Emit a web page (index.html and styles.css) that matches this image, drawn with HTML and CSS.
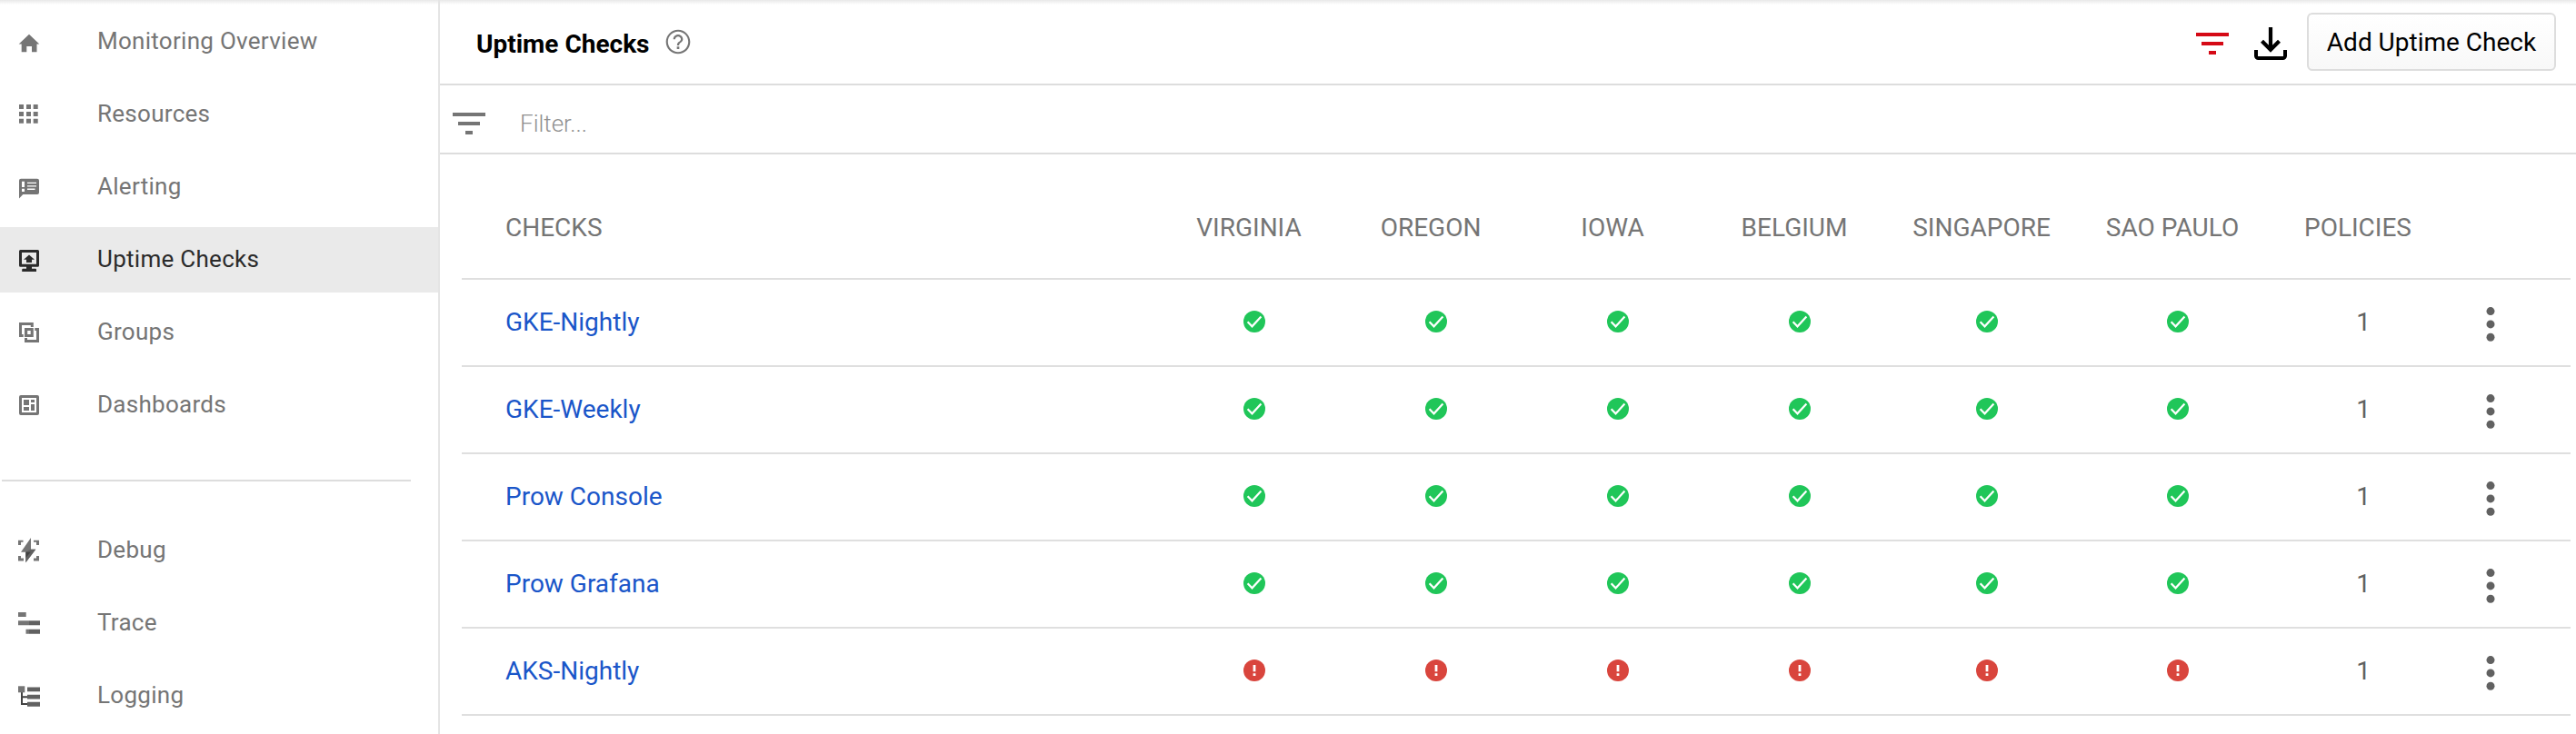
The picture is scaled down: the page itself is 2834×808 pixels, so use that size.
FILE: index.html
```html
<!DOCTYPE html>
<html lang="en">
<head>
<meta charset="utf-8">
<title>Uptime Checks</title>
<link rel="stylesheet" href="styles.css">
</head>
<body>
<svg class="defs" aria-hidden="true">
  <symbol id="ok" viewBox="0 0 24 24"><circle cx="12" cy="12" r="12" fill="#20c659"/><path d="M4.6 12.3l4.9 5L19.4 6.6" fill="none" stroke="#fff" stroke-width="2.2"/></symbol>
  <symbol id="bad" viewBox="0 0 24 24"><circle cx="12" cy="12" r="12" fill="#d9453d"/><path d="M10.6 6h2.8v7.2h-2.8zM10.6 15.2h2.8v2.8h-2.8z" fill="#fff"/></symbol>
  <symbol id="more" viewBox="0 0 10 38"><g fill="#616161"><circle cx="5" cy="4.6" r="4.5"/><circle cx="5" cy="18.9" r="4.5"/><circle cx="5" cy="33.2" r="4.5"/></g></symbol>
  <symbol id="filter" viewBox="0 0 36 24"><path d="M0 0h36v4H0zM6 10h24v4H6zM14 20h8v4h-8z" fill="currentColor"/></symbol>
</svg>
<div class="app">
  <nav class="sidebar">
    <a class="item"><svg class="nav-icon" viewBox="20 20 24 32"><path d="M20.7 38.5L32 27.7l11.3 10.8h-2.8v8.800H35V41h-5.700v6.300h-5.600v-8.800z"/></svg>Monitoring Overview</a>
    <a class="item"><svg class="nav-icon" viewBox="20 20 24 32"><path d="M21 25h5v5h-5zM29 25h5v5h-5zM36.700 25h5v5h-5zM21 33h5v5h-5zM29 33h5v5h-5zM36.700 33h5v5h-5zM21 40.700h5v5h-5zM29 40.700h5v5h-5zM36.700 40.700h5v5h-5z"/></svg>Resources</a>
    <a class="item"><svg class="nav-icon" viewBox="20 20 24 32"><path d="M23 26.700h18a2 2 0 0 1 2 2V42a2 2 0 0 1-2 2H25.300L21 48.400V28.700a2 2 0 0 1 2-2z"/><path fill="#fff" d="M24 29.700h3v6.400h-3zM24 37.800h3v3.200h-3zM30 30.800h10v1.300H30zM30 34.200h10v1.300H30zM30 37.600h8.500v1.300H30z"/></svg>Alerting</a>
    <a class="item selected"><svg class="nav-icon" viewBox="20 20 24 32"><path fill-rule="evenodd" d="M22.500 25h19a1.500 1.500 0 0 1 1.500 1.500v15.700a1.500 1.500 0 0 1-1.500 1.500H35v2h4a1 1 0 0 1 1 1V49H24.200v-2.300a1 1 0 0 1 1-1H29v-2h-6.500a1.500 1.500 0 0 1-1.500-1.500V26.500A1.500 1.500 0 0 1 22.500 25zM24 28v12.700h16V28z"/><path d="M32 30.500l6 5.200h-3V39h-6v-3.300h-3z"/></svg>Uptime Checks</a>
    <a class="item"><svg class="nav-icon" viewBox="20 20 24 32"><path fill-rule="evenodd" d="M21 25h15.800v5h-3v-2H24v10h1.700v3H21zM38.300 31H43v16H27v-5h3v2h10V34h-1.700zM27 31h9.800v10H27zM30.200 34v4h3.500v-4z"/></svg>Groups</a>
    <a class="item"><svg class="nav-icon" viewBox="20 20 24 32"><path fill-rule="evenodd" d="M23 25h18a2 2 0 0 1 2 2v18a2 2 0 0 1-2 2H23a2 2 0 0 1-2-2V27a2 2 0 0 1 2-2zM24 28v16h16V28z"/><path d="M26 30h6v6h-6zM26 38h6v4h-6zM34 30h4v3h-4zM34 35h4v7h-4z"/></svg>Dashboards</a>
    <hr class="divider">
    <a class="item"><svg class="nav-icon" viewBox="20 20 24 32"><path d="M20 24.700h5.500v2H23V30h-3zM37 24.700h6V30h-3v-3.300h-3zM20 42h3v2.500h3v3h-6zM40 42h3v5.500h-6v-3h3z"/><path d="M34 22v12.700h5.300l-11 14.600V37.700H23z"/><path fill="#616161" d="M34 34.700h5.300l-11 14.600V37.700z"/><path fill="#424242" d="M28.500 37.700h5.300l-5.300 6z"/></svg>Debug</a>
    <a class="item"><svg class="nav-icon" viewBox="20 20 24 32"><path d="M20 24h8.700v5H20zM20 33.300h12v5H20zM28.500 42.700H32v5h-3.500z"/><path fill="#616161" d="M32 33.300h12v5H32zM32 42.700h12v5H32z"/></svg>Trace</a>
    <a class="item"><svg class="nav-icon" viewBox="20 20 24 32"><path fill="#424242" d="M23 32h2v4.200h5v2h-5V44h5v2h-7z"/><path d="M20 25.300h7.300v7H20z"/><path fill="#616161" d="M30 26.600h14v4.700H30zM30 34.700h14v4.700H30zM30 42.800h14v4.900H30z"/></svg>Logging</a>
  </nav>
  <main class="main">
    <header class="header">
      <h1 class="title">Uptime Checks</h1>
      <svg class="help" viewBox="0 0 24 24"><path fill="#757575" d="M11 18h2v-2h-2v2zm1-16C6.480 2 2 6.480 2 12s4.480 10 10 10 10-4.480 10-10S17.520 2 12 2zm0 18.400c-4.630 0-8.400-3.770-8.400-8.400S7.370 3.600 12 3.600s8.400 3.770 8.400 8.400-3.770 8.400-8.400 8.400zM12 6c-2.210 0-4 1.790-4 4h1.700c0-1.270 1.030-2.300 2.300-2.300s2.300 1.030 2.300 2.300c0 2-3.150 1.750-3.150 5h1.700c0-2.250 3.150-2.500 3.150-5 0-2.210-1.790-4-4-4z"/></svg>
      <div class="actions">
        <svg class="filter-icon red"><use href="#filter"/></svg>
        <svg class="download" viewBox="0 0 36 36"><path d="M18 0v25M8.500 15.300l9.500 9.500 9.500-9.500" fill="none" stroke="#000" stroke-width="4.200"/><path d="M2 25v6.500a2.500 2.500 0 0 0 2.500 2.500h27a2.500 2.500 0 0 0 2.500-2.500V25" fill="none" stroke="#000" stroke-width="4"/></svg>
        <button class="add">Add Uptime Check</button>
      </div>
    </header>
    <div class="filterbar"><svg class="filter-icon"><use href="#filter"/></svg><input class="filter-input" placeholder="Filter..." aria-label="Filter"></div>
    <section class="table">
      <div class="row head"><span class="name">CHECKS</span><span>VIRGINIA</span><span>OREGON</span><span>IOWA</span><span>BELGIUM</span><span>SINGAPORE</span><span>SAO PAULO</span><span>POLICIES</span></div>
      <div class="row"><a class="name">GKE-Nightly</a><svg class="status"><use href="#ok"/></svg><svg class="status"><use href="#ok"/></svg><svg class="status"><use href="#ok"/></svg><svg class="status"><use href="#ok"/></svg><svg class="status"><use href="#ok"/></svg><svg class="status"><use href="#ok"/></svg><span class="count">1</span><svg class="more"><use href="#more"/></svg></div>
      <div class="row"><a class="name">GKE-Weekly</a><svg class="status"><use href="#ok"/></svg><svg class="status"><use href="#ok"/></svg><svg class="status"><use href="#ok"/></svg><svg class="status"><use href="#ok"/></svg><svg class="status"><use href="#ok"/></svg><svg class="status"><use href="#ok"/></svg><span class="count">1</span><svg class="more"><use href="#more"/></svg></div>
      <div class="row"><a class="name">Prow Console</a><svg class="status"><use href="#ok"/></svg><svg class="status"><use href="#ok"/></svg><svg class="status"><use href="#ok"/></svg><svg class="status"><use href="#ok"/></svg><svg class="status"><use href="#ok"/></svg><svg class="status"><use href="#ok"/></svg><span class="count">1</span><svg class="more"><use href="#more"/></svg></div>
      <div class="row"><a class="name">Prow Grafana</a><svg class="status"><use href="#ok"/></svg><svg class="status"><use href="#ok"/></svg><svg class="status"><use href="#ok"/></svg><svg class="status"><use href="#ok"/></svg><svg class="status"><use href="#ok"/></svg><svg class="status"><use href="#ok"/></svg><span class="count">1</span><svg class="more"><use href="#more"/></svg></div>
      <div class="row"><a class="name">AKS-Nightly</a><svg class="status"><use href="#bad"/></svg><svg class="status"><use href="#bad"/></svg><svg class="status"><use href="#bad"/></svg><svg class="status"><use href="#bad"/></svg><svg class="status"><use href="#bad"/></svg><svg class="status"><use href="#bad"/></svg><span class="count">1</span><svg class="more"><use href="#more"/></svg></div>
    </section>
  </main>
</div>
</body>
</html>
```
FILE: styles.css
```css
* { box-sizing: border-box; }
body { margin: 0; background: #fff; font-family: Roboto, "Liberation Sans", sans-serif; font-size: 28px; color: #757575; overflow: hidden; }
.defs { display: none; }
.app { display: flex; height: 808px; background: linear-gradient(#e8e8e8, #fff 5px); }

.sidebar { flex: none; width: 484px; padding-top: 10px; border-right: 2px solid #e5e5e5; display: flex; flex-direction: column; gap: 8px; }
.item { flex: none; height: 72px; padding: 0 0 2px 20px; display: flex; align-items: center; gap: 63px; font-size: 26px; letter-spacing: 0.28px; line-height: 30px; }
.item.selected { background: #eaeaea; color: #2b2b2b; }
.nav-icon { width: 24px; height: 32px; margin-top: 2px; fill: currentColor; flex: none; }
.divider { flex: none; width: 450px; height: 2px; margin: 38px 0 32px 2px; border: 0; background: #ddd; }

.main { flex: 1; min-width: 0; }
.header { height: 94px; padding: 0 22px 0 40px; border-bottom: 2px solid #ddd; display: flex; align-items: center; }
.title { margin: 6px 0 0; font-size: 28px; line-height: 32px; font-weight: 700; color: #000; }
.help { width: 32px; height: 32px; margin-left: 16px; }
.actions { margin-left: auto; display: flex; align-items: center; }
.filter-icon { width: 36px; height: 24px; flex: none; }
.filter-icon.red { color: #d50a16; margin-top: 4px; }
.download { width: 36px; height: 36px; margin: 4px 22px 0 28px; }
.add { width: 274px; height: 64px; padding: 1px 0 0; border: 2px solid #ddd; border-radius: 6px; background: linear-gradient(#fff, #f8f8f8); font: 28px/32px Roboto, "Liberation Sans", sans-serif; color: #000; white-space: nowrap; }

.filterbar { height: 76px; padding: 10px 14px 0; border-bottom: 2px solid #ddd; display: flex; align-items: center; gap: 38px; }
.filter-input { flex: 1; height: 40px; padding: 0; border: 0; outline: 0; background: none; font: 300 26px/30px Roboto, "Liberation Sans", sans-serif; letter-spacing: 0; }
.filter-input::placeholder { color: #8f8f8f; opacity: 1; }

.table { margin: 0 6px 0 24px; }
.row { height: 96px; display: grid; grid-template-columns: 766px repeat(4, 200px) 212px 208px 200px 92px; align-items: center; justify-items: center; border-bottom: 2px solid #dfdfdf; line-height: 32px; padding-bottom: 2px; }
.row.head { height: 138px; padding: 25px 0 0; }
.name { justify-self: start; padding-left: 48px; }
a.name { margin-top: 2px; color: #1a56c9; }
.status { width: 24px; height: 24px; margin-left: 12px; }
.count { margin: 2px 0 0 12px; color: #616161; }
.more { width: 10px; height: 38px; margin-top: 6px; }
```
